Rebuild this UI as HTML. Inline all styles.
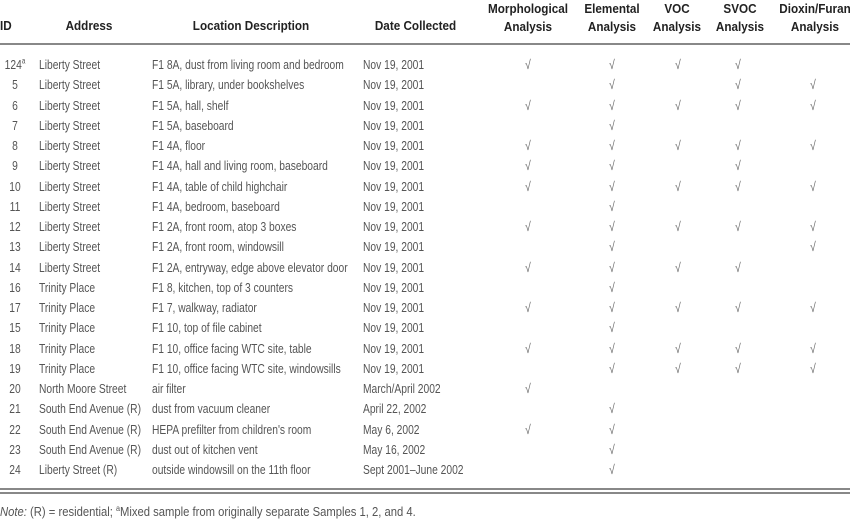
<!DOCTYPE html>
<html><head><meta charset="utf-8"><style>
body{margin:0;width:850px;height:519px;background:#fff;position:relative;overflow:hidden;font-family:"Liberation Sans",sans-serif;color:#555;font-size:13px}
.h{position:absolute;font-weight:bold;color:#222;text-align:center;line-height:18px;font-size:13px;transform:scaleX(0.9)}
.r{position:absolute;left:0;width:850px;height:16px;line-height:16px}
.r span{position:absolute;white-space:nowrap;display:inline-block;transform:scaleX(0.79);transform-origin:left center}
.r span.i,.r span.c{transform-origin:center center}
.i{left:0;width:30px;text-align:center}
.a{left:39px}.l{left:152px}.d{left:363px}
.c{width:20px;text-align:center;color:#666;font-size:13px}
.m{left:518px}.e{left:602px}.v{left:668px}.s{left:728px}.x{left:803px}
.ln{position:absolute;left:0;width:850px;background:#888}
sup{font-size:8px;line-height:0}
</style></head><body>
<div class="h" style="left:0;top:17px;width:16px;text-align:left;transform-origin:left">ID</div>
<div class="h" style="left:59px;top:17px;width:60px">Address</div>
<div class="h" style="left:181px;top:17px;width:140px">Location Description</div>
<div class="h" style="left:368px;top:17px;width:95px">Date Collected</div>
<div class="h" style="left:478px;top:0px;width:100px">Morphological<br>Analysis</div>
<div class="h" style="left:572px;top:0px;width:80px">Elemental<br>Analysis</div>
<div class="h" style="left:647px;top:0px;width:60px">VOC<br>Analysis</div>
<div class="h" style="left:710px;top:0px;width:60px">SVOC<br>Analysis</div>
<div class="h" style="left:775px;top:0px;width:80px">Dioxin/Furan<br>Analysis</div>
<div class="ln" style="top:43px;height:2px"></div>

<div class="r" style="top:57px"><span class="i">124<sup>a</sup></span><span class="a">Liberty Street</span><span class="l">F1 8A, dust from living room and bedroom</span><span class="d">Nov 19, 2001</span><span class="c m">√</span><span class="c e">√</span><span class="c v">√</span><span class="c s">√</span></div>
<div class="r" style="top:77.25px"><span class="i">5</span><span class="a">Liberty Street</span><span class="l">F1 5A, library, under bookshelves</span><span class="d">Nov 19, 2001</span><span class="c e">√</span><span class="c s">√</span><span class="c x">√</span></div>
<div class="r" style="top:97.5px"><span class="i">6</span><span class="a">Liberty Street</span><span class="l">F1 5A, hall, shelf</span><span class="d">Nov 19, 2001</span><span class="c m">√</span><span class="c e">√</span><span class="c v">√</span><span class="c s">√</span><span class="c x">√</span></div>
<div class="r" style="top:117.75px"><span class="i">7</span><span class="a">Liberty Street</span><span class="l">F1 5A, baseboard</span><span class="d">Nov 19, 2001</span><span class="c e">√</span></div>
<div class="r" style="top:138px"><span class="i">8</span><span class="a">Liberty Street</span><span class="l">F1 4A, floor</span><span class="d">Nov 19, 2001</span><span class="c m">√</span><span class="c e">√</span><span class="c v">√</span><span class="c s">√</span><span class="c x">√</span></div>
<div class="r" style="top:158.25px"><span class="i">9</span><span class="a">Liberty Street</span><span class="l">F1 4A, hall and living room, baseboard</span><span class="d">Nov 19, 2001</span><span class="c m">√</span><span class="c e">√</span><span class="c s">√</span></div>
<div class="r" style="top:178.5px"><span class="i">10</span><span class="a">Liberty Street</span><span class="l">F1 4A, table of child highchair</span><span class="d">Nov 19, 2001</span><span class="c m">√</span><span class="c e">√</span><span class="c v">√</span><span class="c s">√</span><span class="c x">√</span></div>
<div class="r" style="top:198.75px"><span class="i">11</span><span class="a">Liberty Street</span><span class="l">F1 4A, bedroom, baseboard</span><span class="d">Nov 19, 2001</span><span class="c e">√</span></div>
<div class="r" style="top:219px"><span class="i">12</span><span class="a">Liberty Street</span><span class="l">F1 2A, front room, atop 3 boxes</span><span class="d">Nov 19, 2001</span><span class="c m">√</span><span class="c e">√</span><span class="c v">√</span><span class="c s">√</span><span class="c x">√</span></div>
<div class="r" style="top:239.25px"><span class="i">13</span><span class="a">Liberty Street</span><span class="l">F1 2A, front room, windowsill</span><span class="d">Nov 19, 2001</span><span class="c e">√</span><span class="c x">√</span></div>
<div class="r" style="top:259.5px"><span class="i">14</span><span class="a">Liberty Street</span><span class="l">F1 2A, entryway, edge above elevator door</span><span class="d">Nov 19, 2001</span><span class="c m">√</span><span class="c e">√</span><span class="c v">√</span><span class="c s">√</span></div>
<div class="r" style="top:279.75px"><span class="i">16</span><span class="a">Trinity Place</span><span class="l">F1 8, kitchen, top of 3 counters</span><span class="d">Nov 19, 2001</span><span class="c e">√</span></div>
<div class="r" style="top:300px"><span class="i">17</span><span class="a">Trinity Place</span><span class="l">F1 7, walkway, radiator</span><span class="d">Nov 19, 2001</span><span class="c m">√</span><span class="c e">√</span><span class="c v">√</span><span class="c s">√</span><span class="c x">√</span></div>
<div class="r" style="top:320.25px"><span class="i">15</span><span class="a">Trinity Place</span><span class="l">F1 10, top of file cabinet</span><span class="d">Nov 19, 2001</span><span class="c e">√</span></div>
<div class="r" style="top:340.5px"><span class="i">18</span><span class="a">Trinity Place</span><span class="l">F1 10, office facing WTC site, table</span><span class="d">Nov 19, 2001</span><span class="c m">√</span><span class="c e">√</span><span class="c v">√</span><span class="c s">√</span><span class="c x">√</span></div>
<div class="r" style="top:360.75px"><span class="i">19</span><span class="a">Trinity Place</span><span class="l">F1 10, office facing WTC site, windowsills</span><span class="d">Nov 19, 2001</span><span class="c e">√</span><span class="c v">√</span><span class="c s">√</span><span class="c x">√</span></div>
<div class="r" style="top:381px"><span class="i">20</span><span class="a">North Moore Street</span><span class="l">air filter</span><span class="d">March/April 2002</span><span class="c m">√</span></div>
<div class="r" style="top:401.25px"><span class="i">21</span><span class="a">South End Avenue (R)</span><span class="l">dust from vacuum cleaner</span><span class="d">April 22, 2002</span><span class="c e">√</span></div>
<div class="r" style="top:421.5px"><span class="i">22</span><span class="a">South End Avenue (R)</span><span class="l">HEPA prefilter from children's room</span><span class="d">May 6, 2002</span><span class="c m">√</span><span class="c e">√</span></div>
<div class="r" style="top:441.75px"><span class="i">23</span><span class="a">South End Avenue (R)</span><span class="l">dust out of kitchen vent</span><span class="d">May 16, 2002</span><span class="c e">√</span></div>
<div class="r" style="top:462px"><span class="i">24</span><span class="a">Liberty Street (R)</span><span class="l">outside windowsill on the 11th floor</span><span class="d">Sept 2001–June 2002</span><span class="c e">√</span></div>

<div class="ln" style="top:488px;height:2px"></div>
<div class="ln" style="top:492px;height:2px"></div>
<div class="r" style="top:504px"><span style="left:0;font-size:12.5px;transform:scaleX(0.9)"><i>Note:</i> (R) = residential; <sup>a</sup>Mixed sample from originally separate Samples 1, 2, and 4.</span></div>
</body></html>
